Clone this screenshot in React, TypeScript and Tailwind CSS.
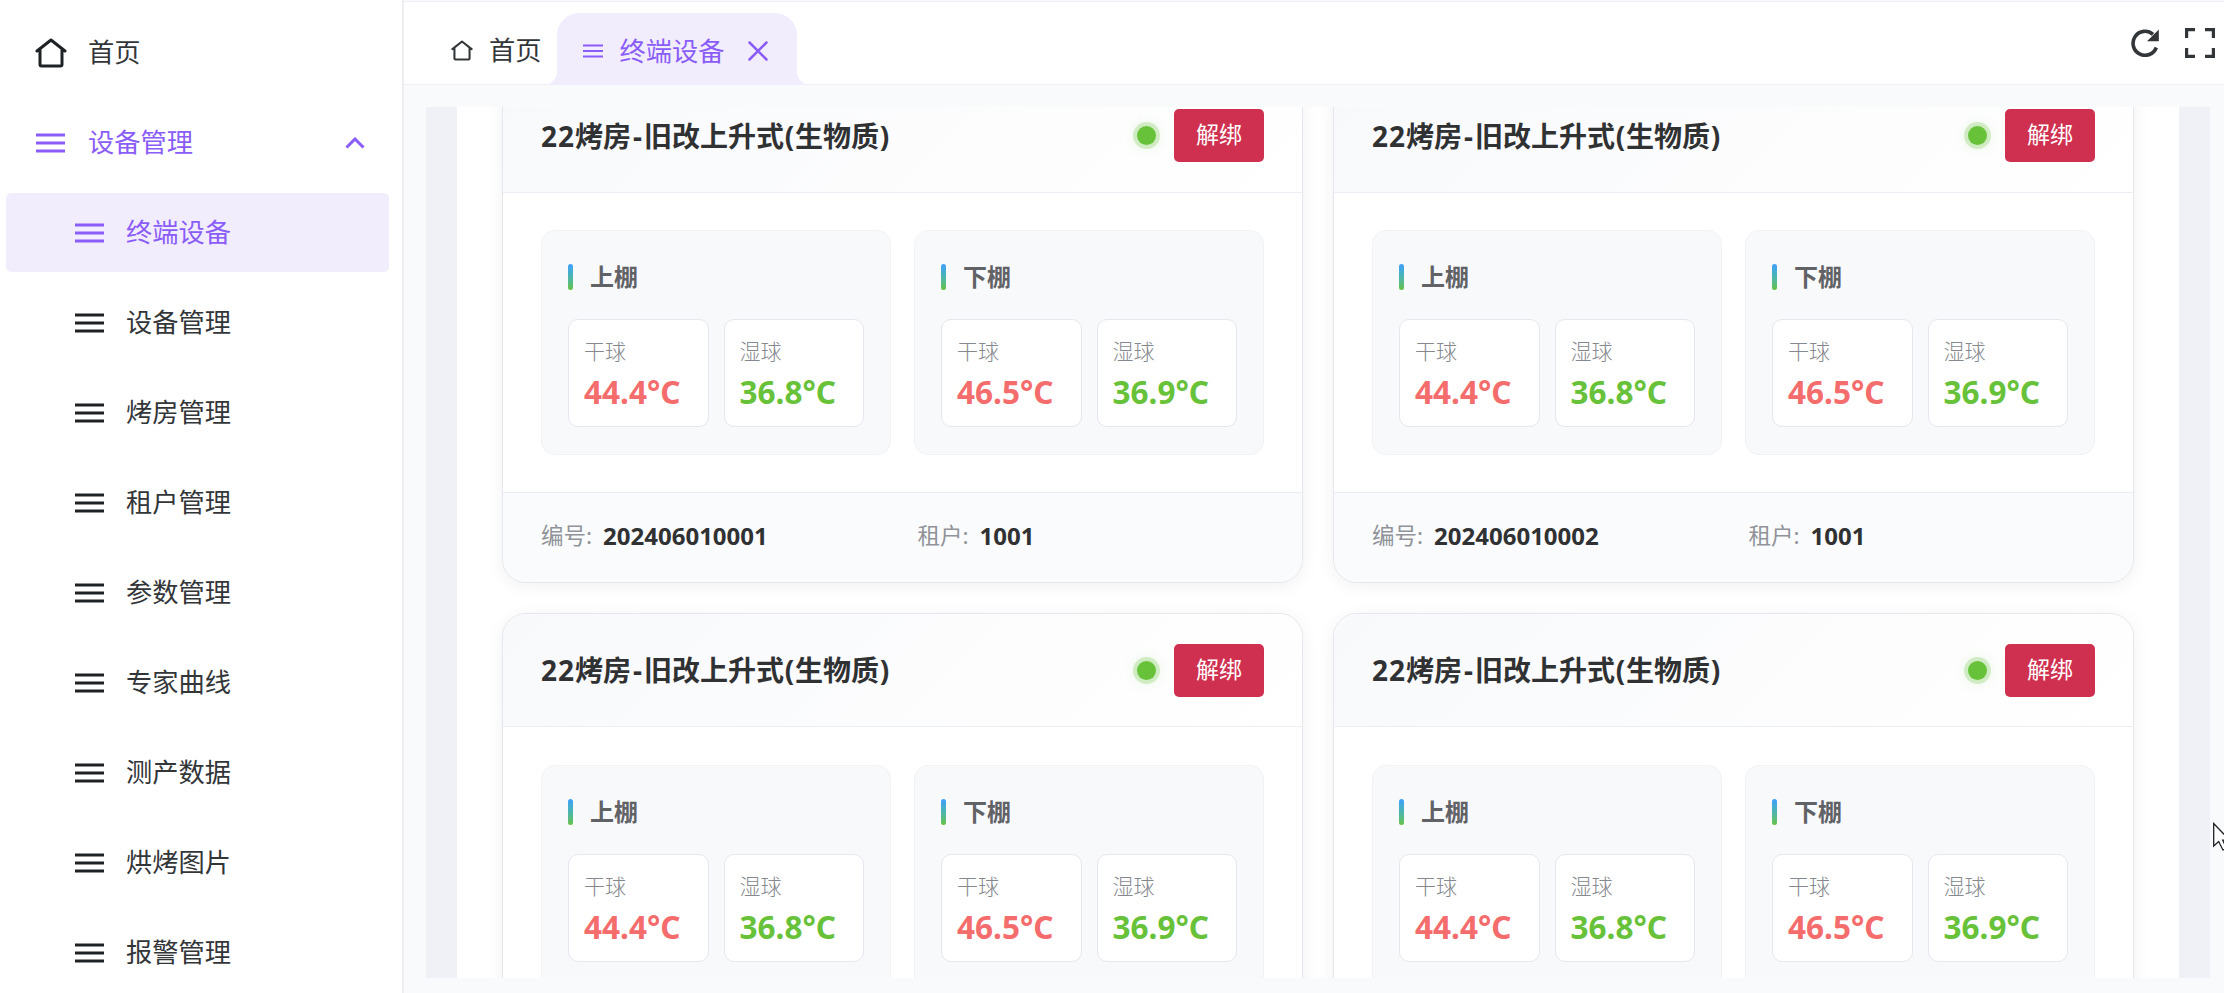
import React from "react";

const subItems = [
  "终端设备",
  "设备管理",
  "烤房管理",
  "租户管理",
  "参数管理",
  "专家曲线",
  "测产数据",
  "烘烤图片",
  "报警管理",
];

const devices = ["202406010001", "202406010002", "202406010003", "202406010004"];

const zones = [
  { name: "上棚", dry: "44.4", wet: "36.8" },
  { name: "下棚", dry: "46.5", wet: "36.9" },
];

function HomeIcon({ className, stroke }: { className: string; stroke: number }) {
  return (
    <svg viewBox="0 0 32 30" className={className} fill="none" stroke="currentColor" strokeWidth={stroke} strokeLinecap="round" strokeLinejoin="round">
      <path d="M2 13 16 2l14 11M5 11v15.500q0 1.500 1.500 1.500h19q1.500 0 1.500-1.500V11" />
    </svg>
  );
}

function MenuIcon({ className }: { className: string }) {
  return (
    <svg viewBox="0 0 29 20" className={className} fill="currentColor">
      <path d="M0 0.5h29v3H0zM0 8.500h29v3H0zM0 16.500h29v3H0z" />
    </svg>
  );
}

function Sidebar() {
  return (
    <aside className="flex w-[404px] shrink-0 flex-col gap-[11px] border-r-2 border-[#ededf3] bg-white pt-[13px] pl-[6px] pr-[13px] text-[26.250px] text-[#333639]">
      <div className="flex h-[79px] shrink-0 items-center pl-[29px]">
        <HomeIcon className="h-[30px] w-8 text-[#1f2225]" stroke={3} />
        <span className="ml-[21px]">首页</span>
      </div>
      <div className="flex h-[79px] shrink-0 items-center pl-[30px] text-[#8a5cf8]">
        <MenuIcon className="h-5 w-[29px]" />
        <span className="ml-[23px]">设备管理</span>
        <svg viewBox="0 0 20 12" className="mr-[24px] ml-auto h-3 w-5" fill="none" stroke="currentColor" strokeWidth="3">
          <path d="M1.500 10.500 10 2l8.500 8.500" />
        </svg>
      </div>
      {subItems.map((label, i) => (
        <div
          key={label}
          className={
            i === 0
              ? "flex h-[79px] shrink-0 items-center rounded-[5px] bg-[#f2edfd] pl-[68.500px] text-[#8a5cf8]"
              : "flex h-[79px] shrink-0 items-center pl-[68.500px]"
          }
        >
          <MenuIcon className={i === 0 ? "h-5 w-[29px]" : "h-5 w-[29px] text-[#1f2225]"} />
          <span className="ml-[22.500px]">{label}</span>
        </div>
      ))}
    </aside>
  );
}

function Header() {
  return (
    <header className="flex h-[84px] shrink-0 items-end border-t border-b border-[#efeff5] bg-white text-[26.250px] text-[#333639]">
      <div className="flex h-[68px] items-center pl-[47px]">
        <HomeIcon className="h-[21px] w-[22px]" stroke={3} />
        <span className="ml-[16px]">首页</span>
      </div>
      <div className="relative -mb-px ml-[15px] flex h-[72px] w-[240px] items-center rounded-t-[22px] bg-[#f2edfd] pt-[4px] pl-[26px] text-[#8a5cf8]">
        <svg viewBox="0 0 10 12" className="absolute bottom-0 -left-[10px] h-3 w-[10px]" fill="#f2edfd">
          <path d="M10 0Q9 8 0 12h10z" />
        </svg>
        <svg viewBox="0 0 10 12" className="absolute -right-[10px] bottom-0 h-3 w-[10px]" fill="#f2edfd">
          <path d="M0 0Q1 8 10 12H0z" />
        </svg>
        <MenuIcon className="h-[14px] w-5" />
        <span className="ml-[17px]">终端设备</span>
        <svg viewBox="0 0 20 20" className="ml-[23px] h-5 w-5" fill="none" stroke="currentColor" strokeWidth="2.500" strokeLinecap="round">
          <path d="m1.500 1.500 17 17m0-17-17 17" />
        </svg>
      </div>
      <div className="mr-[9px] mb-[26px] ml-auto flex items-center gap-[26px]">
        <svg viewBox="0 0 28 28" className="h-[28px] w-[28px]" fill="none">
          <path d="M25.300 18.500A12 12 0 1 1 22 5.300" stroke="#333639" strokeWidth="3.600" />
          <path d="M27.800 0.500V12.300H16z" fill="#333639" />
        </svg>
        <svg viewBox="0 0 30 30" className="h-[30px] w-[30px]" fill="none" stroke="#333639" strokeWidth="3.200">
          <path d="M10 1.600H1.600V10M20 1.600h8.400V10M10 28.400H1.600V20M20 28.400h8.400V20" />
        </svg>
      </div>
    </header>
  );
}

function Reading({ label, value, tone }: { label: string; value: string; tone: string }) {
  return (
    <div className="flex h-[108px] flex-1 flex-col rounded-[10px] border border-[#e4e7ed] bg-white pt-[15px] pl-[15px]">
      <span className="text-[21px] leading-[32px] font-light text-[#85888e]">{label}</span>
      <span className={tone}>{value}°C</span>
    </div>
  );
}

function Zone({ name, dry, wet }: { name: string; dry: string; wet: string }) {
  return (
    <section className="h-[225px] flex-1 rounded-[14px] border border-[#f0f2f5] bg-[#f8f9fb] px-[26px] pt-[27px]">
      <div className="flex h-[38px] items-center">
        <i className="h-[26px] w-[5px] rounded-[3px] bg-linear-to-b from-[#409eff] to-[#67c23a]" />
        <h4 className="ml-[17px] text-[24px] font-bold text-[#606266]">{name}</h4>
      </div>
      <div className="mt-[23px] flex gap-[15px]">
        <Reading label="干球" value={dry} tone="mt-[3px] text-[31.500px] leading-[44px] font-bold text-[#f56c6c]" />
        <Reading label="湿球" value={wet} tone="mt-[3px] text-[31.500px] leading-[44px] font-bold text-[#67c23a]" />
      </div>
    </section>
  );
}

function DeviceCard({ code }: { code: string }) {
  return (
    <article className="flex h-[504.500px] flex-col overflow-hidden rounded-[24px] border border-[#e4e7ed] bg-white shadow-[0_3px_18px_rgba(0,0,0,0.060)]">
      <div className="flex h-[113px] shrink-0 items-center border-b border-[#ebeef5] bg-linear-[135deg,#f8f9fb_0%,#ffffff_100%] px-[38px]">
        <h3 className="text-[28px] font-bold text-[#303133]">
          <span className="tracking-[1px]">22</span>烤房<span className="px-[2px]">-</span>旧改上升式<span className="px-[0.750px]">(</span>生物质<span className="px-[0.750px]">)</span>
        </h3>
        <i className="ml-auto h-[19px] w-[19px] rounded-full bg-[#67c23a] shadow-[0_0_0_4px_rgba(103,194,58,0.250),0_0_12px_4px_rgba(103,194,58,0.120)]" />
        <button className="ml-[18px] h-[53px] w-[90px] rounded-[5px] bg-[#d03050] pb-[2px] text-[23px] font-normal text-white">解绑</button>
      </div>
      <div className="flex h-[299.500px] shrink-0 gap-[23px] px-[38px] pt-[37.500px]">
        {zones.map((z) => (
          <Zone key={z.name} {...z} />
        ))}
      </div>
      <div className="grid flex-1 grid-cols-2 items-center gap-[30px] border-t border-[#ebeef5] bg-[#fafbfc] px-[38px] pb-[3px]">
        <div className="flex items-center gap-[11px]">
          <span className="text-[22.500px] text-[#909399]">编号:</span>
          <span className="text-[24px] font-bold text-[#303133]">{code}</span>
        </div>
        <div className="flex items-center gap-[11px]">
          <span className="text-[22.500px] text-[#909399]">租户:</span>
          <span className="text-[24px] font-bold text-[#303133]">1001</span>
        </div>
      </div>
    </article>
  );
}

export default function App() {
  return (
    <div className="relative flex h-[993px] w-[2224px] overflow-hidden bg-white font-['Noto_Sans','Noto_Sans_CJK_SC',sans-serif] leading-none">
      <Sidebar />
      <div className="flex min-w-0 flex-1 flex-col bg-[#f8fafc] pt-px">
        <Header />
        <main className="mt-[22px] mr-[14px] ml-[22px] h-[871px] overflow-hidden bg-[#eff1f6] px-[31px]">
          <div className="h-full overflow-hidden bg-white px-[45px]">
            <div className="-mt-[28.500px] grid grid-cols-2 gap-[30px]">
              {devices.map((code) => (
                <DeviceCard key={code} code={code} />
              ))}
            </div>
          </div>
        </main>
      </div>
      <svg viewBox="0 0 20 30" className="absolute top-[822px] left-[2213px] h-[30px] w-5" fill="#ffffff" stroke="#1f2225" strokeWidth="1.300">
        <path d="M0.700 1.500v22.500l5-4.500 4.200 8.500 3.600-1.800-3.800-8h7z" />
      </svg>
    </div>
  );
}
